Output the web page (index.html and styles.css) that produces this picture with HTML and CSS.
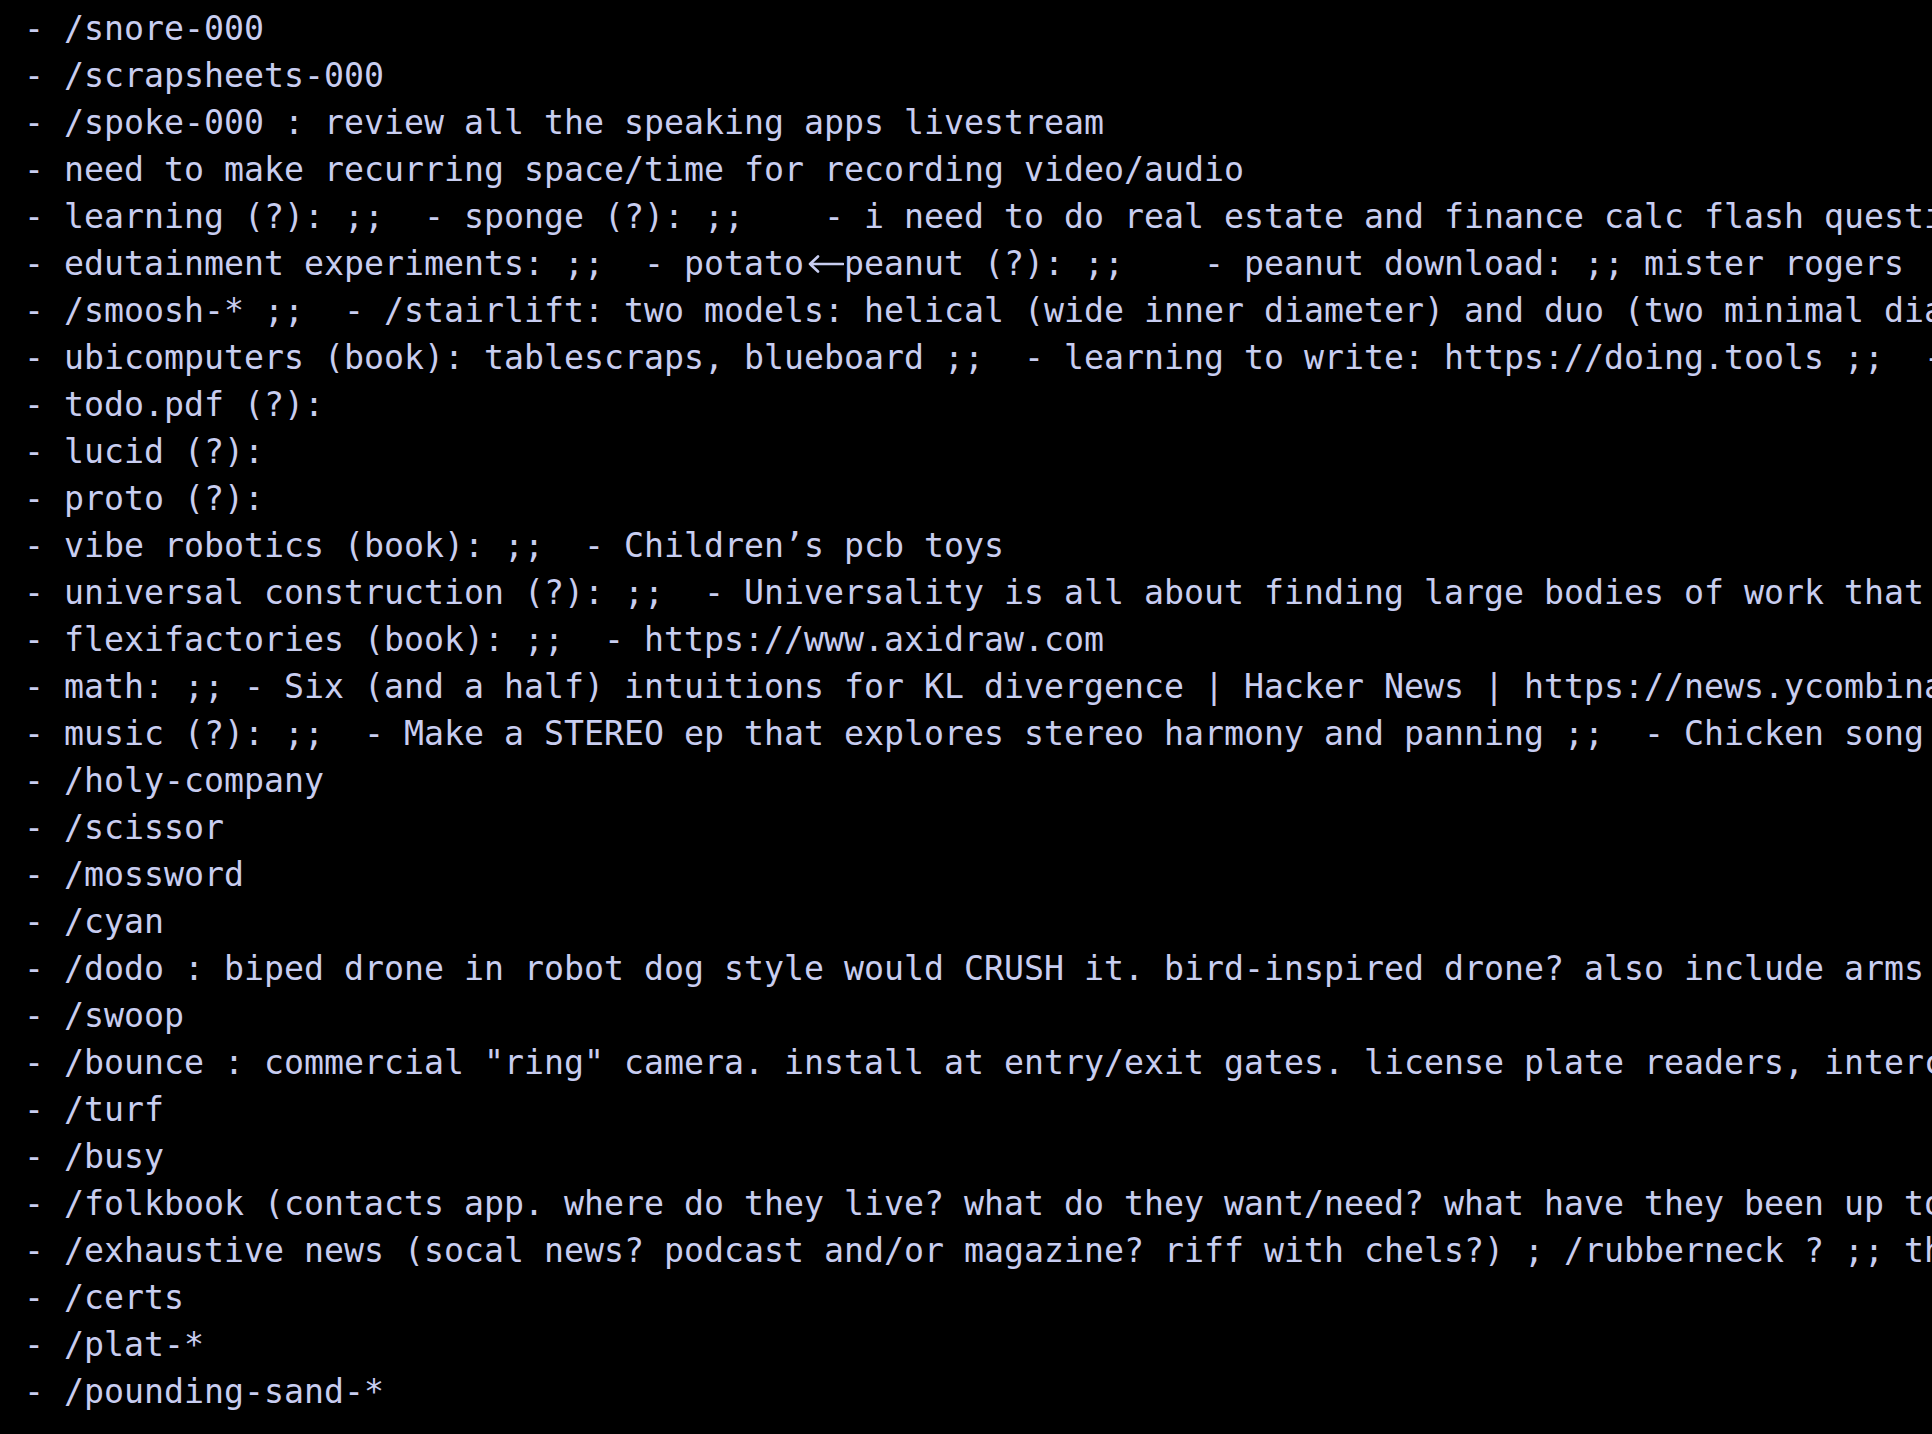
FILE: index.html
```html
<!DOCTYPE html>
<html lang="en">
<head>
<meta charset="utf-8">
<title>notes</title>
<link rel="stylesheet" href="styles.css">
</head>
<body>
<main class="term">
<div class="line">- /snore-000</div>
<div class="line">- /scrapsheets-000</div>
<div class="line">- /spoke-000 : review all the speaking apps livestream</div>
<div class="line">- need to make recurring space/time for recording video/audio</div>
<div class="line">- learning (?): ;;  - sponge (?): ;;    - i need to do real estate and finance calc flash questions</div>
<div class="line">- edutainment experiments: ;;  - potato<span class="arrow" aria-label="&lt;-"><svg viewBox="0 0 40 20" width="40" height="20"><path d="M6 10 H39 M14 2.5 L6 10 L14 17.5" fill="none" stroke="currentColor" stroke-width="2.6" stroke-linecap="round" stroke-linejoin="round"/></svg></span>peanut (?): ;;    - peanut download: ;; mister rogers</div>
<div class="line">- /smoosh-* ;;  - /stairlift: two models: helical (wide inner diameter) and duo (two minimal diameters)</div>
<div class="line">- ubicomputers (book): tablescraps, blueboard ;;  - learning to write: https://doing.tools ;;  - more</div>
<div class="line">- todo.pdf (?):</div>
<div class="line">- lucid (?):</div>
<div class="line">- proto (?):</div>
<div class="line">- vibe robotics (book): ;;  - Children’s pcb toys</div>
<div class="line">- universal construction (?): ;;  - Universality is all about finding large bodies of work that</div>
<div class="line">- flexifactories (book): ;;  - https://www.axidraw.com</div>
<div class="line">- math: ;; - Six (and a half) intuitions for KL divergence | Hacker News | https://news.ycombinator.com</div>
<div class="line">- music (?): ;;  - Make a STEREO ep that explores stereo harmony and panning ;;  - Chicken song</div>
<div class="line">- /holy-company</div>
<div class="line">- /scissor</div>
<div class="line">- /mossword</div>
<div class="line">- /cyan</div>
<div class="line">- /dodo : biped drone in robot dog style would CRUSH it. bird-inspired drone? also include arms</div>
<div class="line">- /swoop</div>
<div class="line">- /bounce : commercial "ring" camera. install at entry/exit gates. license plate readers, intercoms</div>
<div class="line">- /turf</div>
<div class="line">- /busy</div>
<div class="line">- /folkbook (contacts app. where do they live? what do they want/need? what have they been up to</div>
<div class="line">- /exhaustive news (socal news? podcast and/or magazine? riff with chels?) ; /rubberneck ? ;; the</div>
<div class="line">- /certs</div>
<div class="line">- /plat-*</div>
<div class="line">- /pounding-sand-*</div>
</main>
</body>
</html>
```

FILE: styles.css
```css
html, body {
  margin: 0;
  padding: 0;
  background: #000;
  overflow: hidden;
  width: 1932px;
  height: 1434px;
}

.term {
  padding: 5px 0 0 24px;
  font-family: "DejaVu Sans Mono", "Liberation Mono", monospace;
  font-size: 33.22px;
  line-height: 47px;
  color: #c8cdf0;
}

.line {
  white-space: pre;
  height: 47px;
}

.arrow {
  display: inline-block;
  width: 2ch;
  height: 20px;
  vertical-align: 1px;
}

.arrow svg {
  display: block;
}
```
